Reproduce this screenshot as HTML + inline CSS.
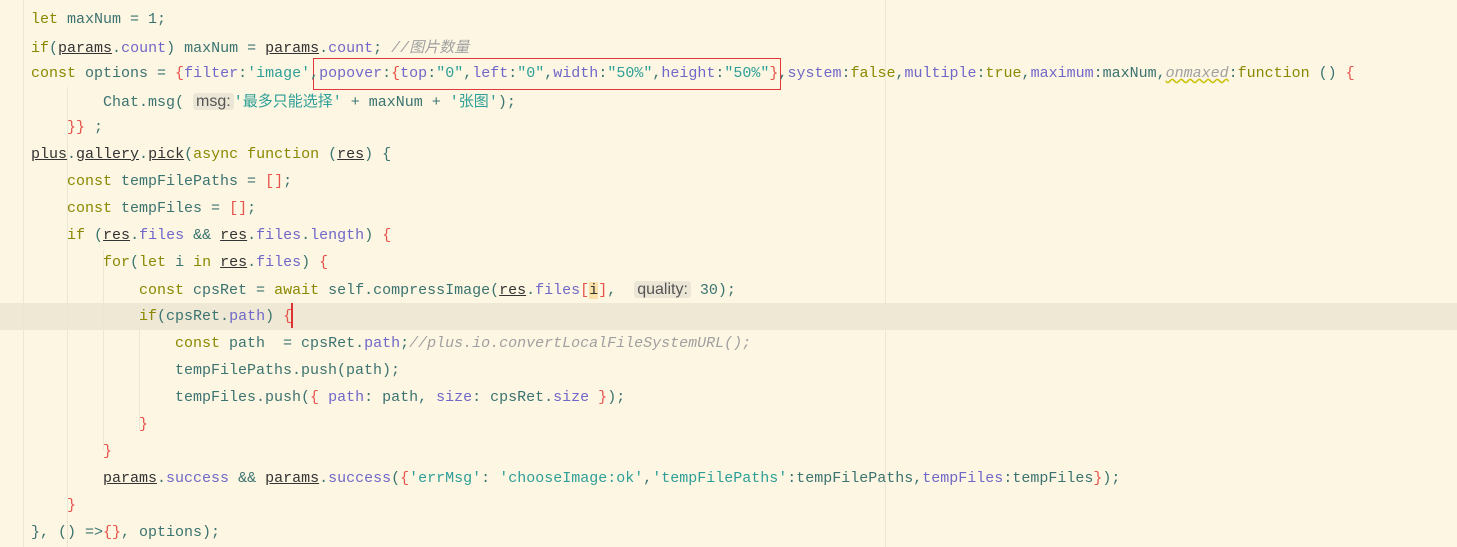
<!DOCTYPE html>
<html><head><meta charset="utf-8"><style>
body{margin:0;width:1457px;height:547px;background:#fdf6e3;overflow:hidden;position:relative;font-family:"Liberation Mono","Noto Sans CJK SC",monospace;font-size:15px}
.l{position:absolute;left:31px;height:27px;line-height:27px;white-space:pre;color:#3b7370}
.k{color:#8a8800}.p{color:#7068c8}.s{color:#2e9f97}.b{color:#e5534b}.c{color:#a0a0a0;font-style:italic}.u{text-decoration:underline;color:#333}
.h{background:#ece6d6;color:#555;font-family:"Liberation Sans",sans-serif;border-radius:3px;padding:0 3px;font-size:16px}
.g{position:absolute;top:0;width:1px;height:547px;background:#ece6d4}
.cn{font-family:"Noto Sans CJK SC",sans-serif}
</style></head><body>
<div style="position:absolute;left:0;top:303px;width:1457px;height:27px;background:#eee8d5"></div>
<div class="g" style="left:23px"></div><div class="g" style="left:67px;top:87px;height:460px"></div><div class="g" style="left:103px;top:250px;height:200px"></div><div class="g" style="left:139px;top:330px;height:100px"></div><div class="g" style="left:885px"></div>
<div style="position:absolute;left:313px;top:58px;width:468px;height:32px;border:1px solid #e5363a;box-sizing:border-box"></div>
<div style="position:absolute;left:291px;top:303px;width:2px;height:25px;background:#d33"></div>
<div class="l" style="top:6px"><span class="k">let</span> maxNum = 1;</div>
<div class="l" style="top:33px"><span class="k">if</span>(<span class="u">params</span>.<span class="p">count</span>) maxNum = <span class="u">params</span>.<span class="p">count</span>; <span class="c">//<span class="cn">图片数量</span></span></div>
<div class="l" style="top:60px"><span class="k">const</span> options = <span class="b">{</span><span class="p">filter</span>:<span class="s">'image'</span>,<span class="p">popover</span>:<span class="b">{</span><span class="p">top</span>:<span class="s">"0"</span>,<span class="p">left</span>:<span class="s">"0"</span>,<span class="p">width</span>:<span class="s">"50%"</span>,<span class="p">height</span>:<span class="s">"50%"</span><span class="b">}</span>,<span class="p">system</span>:<span class="k">false</span>,<span class="p">multiple</span>:<span class="k">true</span>,<span class="p">maximum</span>:maxNum,<span class="c" style="text-decoration:underline wavy #c8c000">onmaxed</span>:<span class="k">function</span> () <span class="b">{</span></div>
<div class="l" style="top:87px">        Chat.msg( <span class="h">msg:</span><span class="s">'<span class="cn">最多只能选择</span>'</span> + maxNum + <span class="s">'<span class="cn">张图</span>'</span>);</div>
<div class="l" style="top:114px">    <span class="b">}}</span> ;</div>
<div class="l" style="top:141px"><span class="u">plus</span>.<span class="u">gallery</span>.<span class="u">pick</span>(<span class="k">async function</span> (<span class="u">res</span>) {</div>
<div class="l" style="top:168px">    <span class="k">const</span> tempFilePaths = <span class="b">[]</span>;</div>
<div class="l" style="top:195px">    <span class="k">const</span> tempFiles = <span class="b">[]</span>;</div>
<div class="l" style="top:222px">    <span class="k">if</span> (<span class="u">res</span>.<span class="p">files</span> &amp;&amp; <span class="u">res</span>.<span class="p">files</span>.<span class="p">length</span>) <span class="b">{</span></div>
<div class="l" style="top:249px">        <span class="k">for</span>(<span class="k">let</span> i <span class="k">in</span> <span class="u">res</span>.<span class="p">files</span>) <span class="b">{</span></div>
<div class="l" style="top:276px">            <span class="k">const</span> cpsRet = <span class="k">await</span> self.compressImage(<span class="u">res</span>.<span class="p">files</span><span class="b">[</span><span style="background:#fbe0a8;color:#333">i</span><span class="b">]</span>,  <span class="h">quality:</span> 30);</div>
<div class="l" style="top:303px">            <span class="k">if</span>(cpsRet.<span class="p">path</span>) <span class="b">{</span></div>
<div class="l" style="top:330px">                <span class="k">const</span> path  = cpsRet.<span class="p">path</span>;<span class="c">//plus.io.convertLocalFileSystemURL();</span></div>
<div class="l" style="top:357px">                tempFilePaths.push(path);</div>
<div class="l" style="top:384px">                tempFiles.push(<span class="b">{</span> <span class="p">path</span>: path, <span class="p">size</span>: cpsRet.<span class="p">size</span> <span class="b">}</span>);</div>
<div class="l" style="top:411px">            <span class="b">}</span></div>
<div class="l" style="top:438px">        <span class="b">}</span></div>
<div class="l" style="top:465px">        <span class="u">params</span>.<span class="p">success</span> &amp;&amp; <span class="u">params</span>.<span class="p">success</span>(<span class="b">{</span><span class="s">'errMsg'</span>: <span class="s">'chooseImage:ok'</span>,<span class="s">'tempFilePaths'</span>:tempFilePaths,<span class="p">tempFiles</span>:tempFiles<span class="b">}</span>);</div>
<div class="l" style="top:492px">    <span class="b">}</span></div>
<div class="l" style="top:519px">}, () =&gt;<span class="b">{}</span>, options);</div>
</body></html>
